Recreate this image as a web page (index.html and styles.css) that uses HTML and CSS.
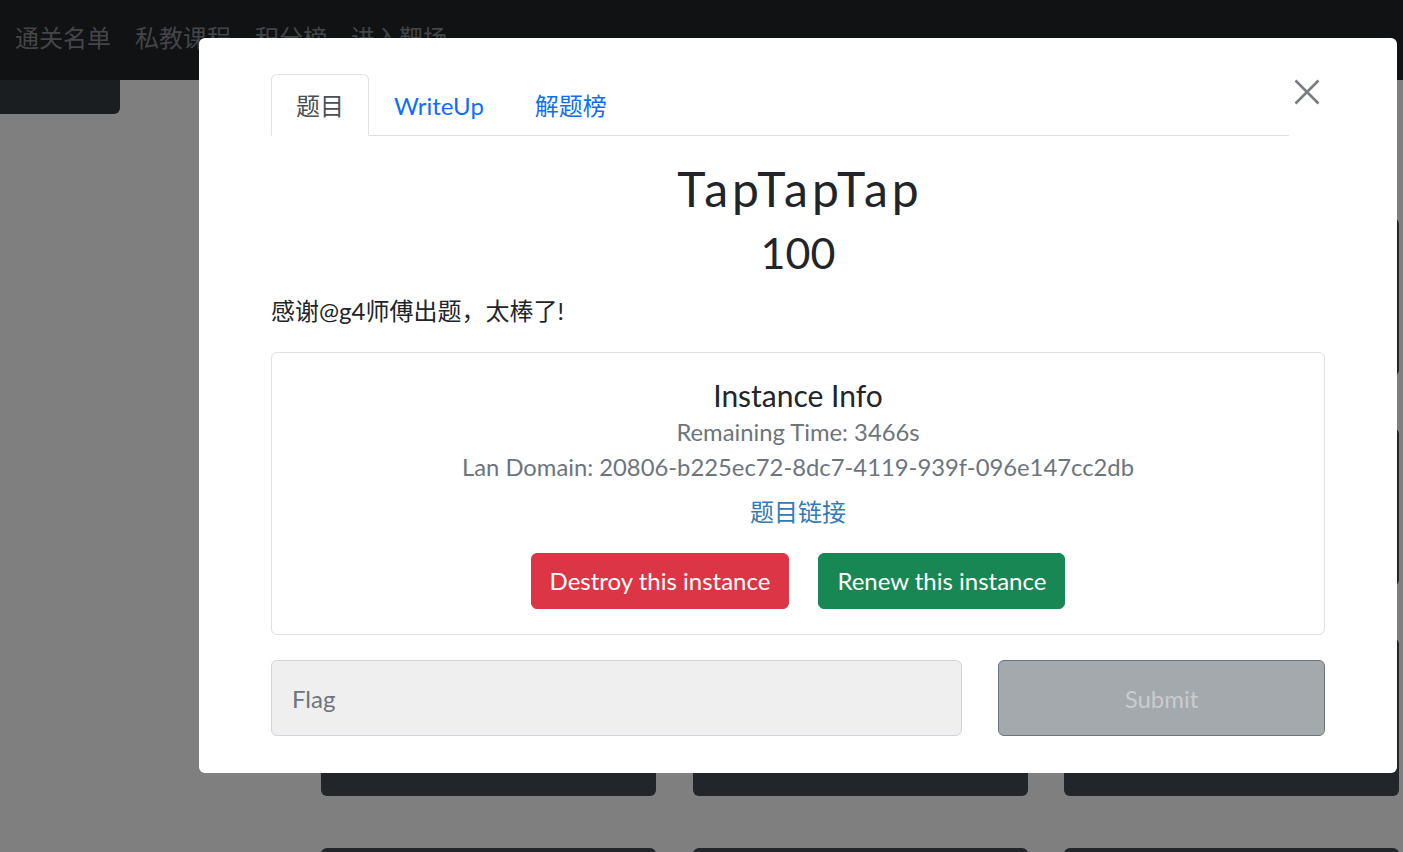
FILE: index.html
```html
<!DOCTYPE html>
<html lang="zh">
<head>
<meta charset="utf-8">
<title>TapTapTap</title>
<link rel="stylesheet" href="styles.css">
</head>
<body>
<header class="navbar">
  <a class="nav-item">通关名单</a>
  <a class="nav-item">私教课程</a>
  <a class="nav-item">积分榜</a>
  <a class="nav-item">进入靶场</a>
</header>
<div class="page">
  <aside class="sidebar"><div class="side-block"></div></aside>
  <main class="grid">
    <div class="card-bg"></div><div class="card-bg"></div><div class="card-bg"></div>
    <div class="card-bg"></div><div class="card-bg"></div><div class="card-bg"></div>
    <div class="card-bg"></div><div class="card-bg"></div><div class="card-bg"></div>
    <div class="card-bg"></div><div class="card-bg"></div><div class="card-bg"></div>
  </main>
</div>
<div class="backdrop"></div>
<div class="modal">
  <div class="modal-head">
    <ul class="tabs">
      <li class="tab active">题目</li>
      <li class="tab">WriteUp</li>
      <li class="tab">解题榜</li>
    </ul>
    <button class="close" aria-label="Close">
      <svg width="26" height="26" viewBox="0 0 26 26"><path d="M1.5 1.5 L24.5 24.5 M24.5 1.5 L1.5 24.5" stroke="#7a7d80" stroke-width="2.6" fill="none"/></svg>
    </button>
  </div>
  <h1 class="title">TapTapTap</h1>
  <h2 class="score">100</h2>
  <p class="desc">感谢@g4师傅出题，太棒了!</p>
  <section class="instance">
    <h5 class="inst-title">Instance Info</h5>
    <p class="muted">Remaining Time: 3466s</p>
    <p class="muted">Lan Domain: 20806-b225ec72-8dc7-4119-939f-096e147cc2db</p>
    <a class="link">题目链接</a>
    <div class="actions">
      <button class="btn btn-red">Destroy this instance</button>
      <button class="btn btn-green">Renew this instance</button>
    </div>
  </section>
  <div class="flag-row">
    <input class="flag" placeholder="Flag" disabled>
    <button class="submit" disabled>Submit</button>
  </div>
</div>
</body>
</html>
```
FILE: styles.css
```css
* { box-sizing: border-box; }
html, body { margin: 0; padding: 0; }
body {
  font-family: Lato, "Noto Sans CJK SC", sans-serif;
  background: #ffffff;
  color: #212529;
  overflow: hidden;
  height: 852px;
}
.navbar {
  height: 80px;
  background: #222428;
  display: flex;
  align-items: center;
  padding: 0 3px 4px;
}
.nav-item {
  font-size: 24px;
  color: #878b91;
  padding: 0 12px;
  line-height: 36px;
}
.page { display: flex; }
.sidebar { width: 120px; flex: none; }
.side-block {
  height: 34px;
  background: #363c42;
  border-bottom-right-radius: 6px;
}
.grid {
  margin-left: 201px;
  padding-top: 138px;
  width: 1078px;
  display: grid;
  grid-template-columns: repeat(3, 335px);
  column-gap: 36.5px;
  row-gap: 52px;
}
.card-bg {
  height: 158px;
  background: #454b52;
  border-radius: 6px;
}
.backdrop {
  position: fixed;
  inset: 0;
  background: rgba(0, 0, 0, 0.5);
}
.modal {
  position: fixed;
  left: 199px;
  top: 38px;
  width: 1198px;
  background: #fff;
  border-radius: 6px;
  padding: 36px 72px 37px;
}
.modal-head { display: flex; align-items: flex-start; }
.tabs {
  flex: 1;
  display: flex;
  list-style: none;
  margin: 0;
  padding: 0;
  border-bottom: 1px solid #dee2e6;
}
.tab {
  font-size: 24px;
  line-height: 36px;
  padding: 13px 24px 11px;
  margin-bottom: -1px;
  border: 1px solid transparent;
  border-top-left-radius: 6px;
  border-top-right-radius: 6px;
  color: #0d6efd;
}
.tab + .tab { padding-right: 25px; }
.tab.active {
  color: #495057;
  background: #fff;
  border-color: #dee2e6 #dee2e6 #fff;
}
.close {
  width: 36px;
  height: 36px;
  border: 0;
  background: none;
  padding: 0;
  margin-top: 0;
  display: flex;
  align-items: center;
  justify-content: center;
}
.title {
  margin: 24px 0 0 4px;
  text-align: center;
  font-size: 48px;
  font-weight: 400;
  letter-spacing: 4px;
  line-height: 58px;
}
.score {
  margin: 8px 0 0;
  text-align: center;
  font-size: 43px;
  font-weight: 400;
  line-height: 54px;
}
.desc {
  margin: 13px 0 0;
  font-size: 24px;
  line-height: 36px;
}
.instance {
  margin-top: 23px;
  border: 1px solid #dee2e6;
  border-radius: 6px;
  padding: 24px 24px 25px;
  text-align: center;
  display: flex;
  flex-direction: column;
  align-items: center;
}
.inst-title {
  margin: 0 0 2px;
  font-size: 30px;
  font-weight: 400;
  line-height: 36px;
}
.muted {
  margin: 0;
  font-size: 23.8px;
  line-height: 35px;
  color: #6c757d;
}
.link {
  margin-top: 9px;
  font-size: 24px;
  line-height: 36px;
  color: #337ab7;
}
.actions {
  margin-top: 23px;
  display: flex;
  gap: 29px;
}
.btn {
  font-family: inherit;
  font-size: 24px;
  line-height: 36px;
  padding: 9px 18px;
  border: 1px solid transparent;
  border-radius: 6px;
  color: #fff;
}
.btn-red { background: #dc3545; border-color: #dc3545; }
.btn-green { background: #198754; border-color: #198754; }
.flag-row {
  margin-top: 25px;
  display: grid;
  grid-template-columns: 691px 1fr;
  gap: 36px;
}
.flag {
  height: 76px;
  font-family: inherit;
  font-size: 24px;
  padding: 0 20px;
  background: #efefef;
  border: 1px solid #ced4da;
  border-radius: 6px;
  color: #212529;
}
.flag::placeholder { color: #6c757d; opacity: 1; }
.submit {
  height: 76px;
  font-family: inherit;
  font-size: 24px;
  background: #a4a9ad;
  border: 1px solid #6c757d;
  border-radius: 6px;
  color: #c9ccce;
}
```
